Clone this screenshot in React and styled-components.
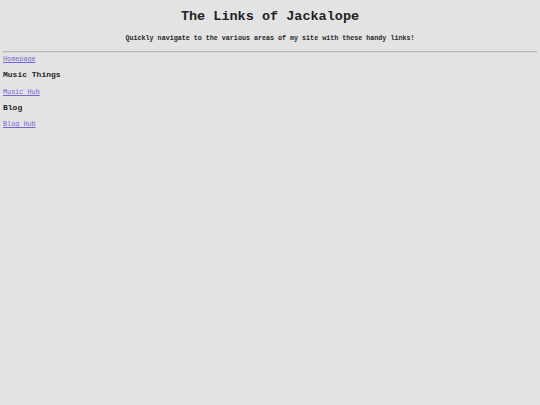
import React from 'react'
import styled, { createGlobalStyle } from 'styled-components'

const GlobalStyle = createGlobalStyle`
  body {
    margin: 5px 3px;
    background: #e3e3e3;
    color: #262626;
    font-family: "Liberation Mono", "Courier New", monospace;
  }
`

const sections = [
  { title: null, links: ['Homepage'] },
  { title: 'Music Things', links: ['Music Hub'] },
  { title: 'Blog', links: ['Blog Hub'] },
]

const App = () => {
  return (
    <>
      <GlobalStyle />
      <Header>
        <Title>The Links of Jackalope</Title>
        <Tagline>Quickly navigate to the various areas of my site with these handy links!</Tagline>
      </Header>
      <Divider />
      <Nav>
        {sections.map((s, i) => (
          <Section key={i}>
            {s.title && <SectionTitle>{s.title}</SectionTitle>}
            {s.links.map(l => (
              <LinkRow key={l}>
                <a href="#">{l}</a>
              </LinkRow>
            ))}
          </Section>
        ))}
      </Nav>
    </>
  )
}

const Header = styled.header`
  text-align: center;
`

const Title = styled.h1`
  margin: 4px 0 0;
  font-size: 13.5px;
  line-height: 16px;
  font-weight: bold;
  color: #222;
`

const Tagline = styled.p`
  margin: 9px 0 0;
  font-size: 6.7px;
  line-height: 8px;
  font-weight: bold;
`

const Divider = styled.hr`
  margin: 9px 0 0;
  border: none;
  border-top: 1px solid #b8b8b8;
  border-bottom: 1px solid #d8d8d8;
`

const Nav = styled.nav`
  display: flex;
  flex-direction: column;
  gap: 7px;
  padding-top: 2px;
`

const Section = styled.section`
  display: flex;
  flex-direction: column;
  gap: 7.5px;
`

const SectionTitle = styled.h2`
  margin: 0;
  font-size: 8px;
  line-height: 10px;
  font-weight: bold;
`

const LinkRow = styled.div`
  font-size: 6.8px;
  line-height: 8px;

  a {
    color: #7268d8;
    text-decoration: underline;
  }
`

export default App
